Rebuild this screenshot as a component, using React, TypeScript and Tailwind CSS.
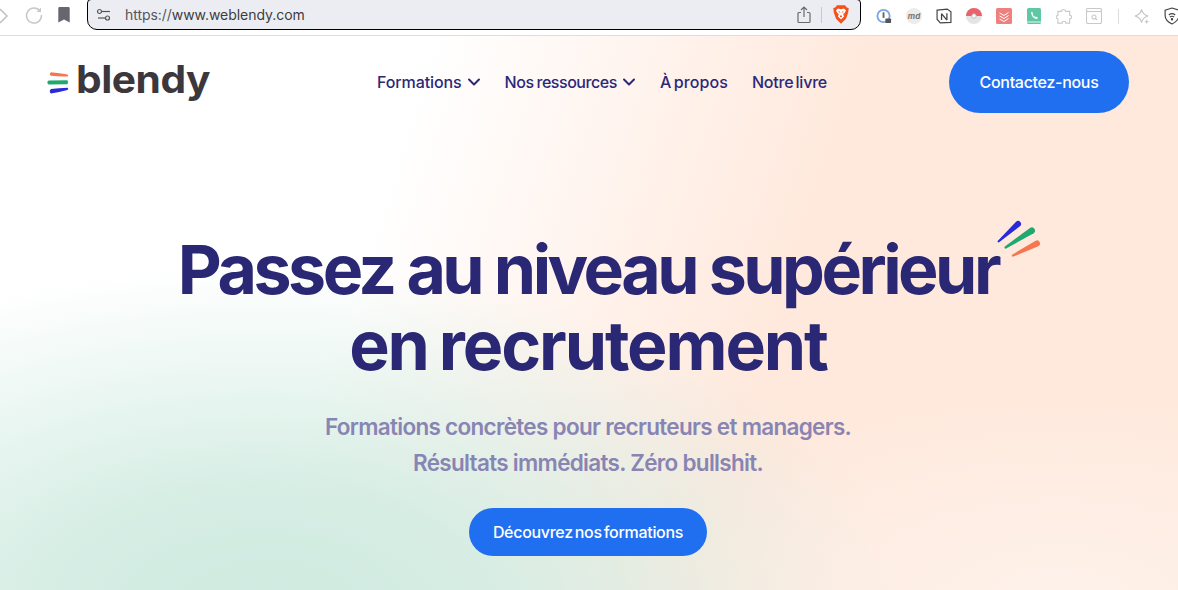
import { ChevronDown } from "lucide-react";

const font = "font-['Inter','Noto_Sans',sans-serif]";

function BrowserBar() {
  return (
    <div className="h-[36px] shrink-0 bg-white border-b border-[#dedede] flex items-center font-['Inter',sans-serif]">
      <div className="w-[87px] shrink-0 h-full flex items-center relative">
        <svg width="10" height="18" viewBox="0 0 10 18" className="absolute left-0 top-[7px]" fill="none" stroke="#c4c4c4" strokeWidth="1.6"><path d="M0 2 L7 9 L0 16" /></svg>
        <svg width="20" height="20" viewBox="0 0 20 20" className="absolute left-[24px] top-[5px]" fill="none" stroke="#c8c8c8" strokeWidth="1.5"><path d="M16 6 A7.5 7.5 0 1 0 17.5 10" /><path d="M12.5 7 L17 7 L17 2.5 Z" fill="#c8c8c8" stroke="none" /></svg>
        <svg width="12" height="16" viewBox="0 0 12 16" className="absolute left-[58px] top-[7px]"><path d="M1.5 0 H10.5 A1.2 1.2 0 0 1 11.7 1.2 V15.6 L6 12.6 L0.3 15.6 V1.2 A1.2 1.2 0 0 1 1.5 0 Z" fill="#666670" /></svg>
      </div>
      <div className="w-[774px] shrink-0 h-[31px] -mt-[6px] bg-[#ecedf3] border border-black rounded-b-[10px] rounded-t-[4px] flex items-center">
        <svg width="16" height="14" viewBox="0 0 16 14" className="ml-[8px]" fill="none" stroke="#555" strokeWidth="1.2"><circle cx="3.5" cy="3.5" r="2" /><path d="M6 3.5 H14" /><circle cx="11.5" cy="10" r="2" /><path d="M2 10 H9" /></svg>
        <span className="ml-[13px] text-[14px] text-[#55555c] tracking-[-0.05px]">https://<span className="text-[#3c3c40]">www.weblendy.com</span></span>
        <div className="ml-auto flex items-center">
          <svg width="14" height="18" viewBox="0 0 14 18" fill="none" stroke="#6a6a6a" strokeWidth="1.2"><path d="M4 6.5 H2 A1 1 0 0 0 1 7.5 V15.5 A1 1 0 0 0 2 16.5 H12 A1 1 0 0 0 13 15.5 V7.5 A1 1 0 0 0 12 6.5 H10" /><path d="M7 11 V1.5 M4 4 L7 1 L10 4" /></svg>
          <div className="w-px h-[16px] bg-[#c8c8cc] ml-[10px] mr-[11px]" />
          <svg width="16" height="19" viewBox="0 0 16 19" className="mr-[11px]">
            <path d="M4 0.3 H12 L13.8 2.4 L15.7 3 L15.2 7.5 L13 13.8 L8 18.7 L3 13.8 L0.8 7.5 L0.3 3 L2.2 2.4 Z" fill="#f4511e" />
            <path d="M5 3.4 L8 4.3 L11 3.4 L13 5.6 L11.5 8.2 L10.2 8.8 L11 11.5 L8 14.5 L5 11.5 L5.8 8.8 L4.5 8.2 L3 5.6 Z" fill="#fff" />
            <path d="M5.6 6.6 L7.2 7.4 M10.4 6.6 L8.8 7.4 M7 11 L8 12 L9 11 Z" stroke="#f4511e" strokeWidth="0.9" fill="#f4511e" />
          </svg>
        </div>
      </div>
      <div className="flex-1 min-w-0 flex items-center pl-[15px] gap-[14px] overflow-hidden h-full -mt-[3px]">
        <svg className="shrink-0" width="16" height="17" viewBox="0 0 17 17" fill="none"><circle cx="8" cy="8" r="6.5" stroke="#7ba6e4" strokeWidth="2" /><rect x="7" y="4" width="2" height="6" fill="#666" /><rect x="10" y="10.5" width="6" height="5" rx="1" fill="#555" /></svg>
        <div className="shrink-0 w-[16px] h-[16px] rounded-full bg-[#ececec] text-[8px] italic font-bold text-[#777] flex items-center justify-center">md</div>
        <svg className="shrink-0" width="16" height="16" viewBox="0 0 15 15" fill="none"><path d="M1 2 L10.5 1 L14 3.5 V13.5 L4 14 L1 10.5 Z" fill="#fff" stroke="#444" strokeWidth="1.1" /><path d="M5.2 5.2 V11.3 M5.2 5.2 L10.2 11.3 M10.2 5 V11.3" stroke="#444" strokeWidth="1.2" /></svg>
        <svg className="shrink-0" width="16" height="16" viewBox="0 0 16 16"><circle cx="8" cy="8" r="8" fill="#e4e4e4" /><path d="M0 8 A8 8 0 0 1 16 8 Z" fill="#e8636b" /><circle cx="8" cy="8" r="2.2" fill="#fff" stroke="#bbb" /></svg>
        <svg className="shrink-0" width="16" height="16" viewBox="0 0 16 16"><rect width="16" height="16" rx="1.5" fill="#ee8080" /><path d="M3.5 5 L8 7.5 L12.5 4.5 M3.5 8 L8 10.5 L12.5 7.5 M3.5 11 L8 13.5 L12.5 10.5" fill="none" stroke="#fff" strokeWidth="1" /></svg>
        <svg className="shrink-0" width="16" height="16" viewBox="-1 0 16 16"><rect width="14" height="16" rx="1.5" fill="#5fc7a6" /><rect x="0" y="13.5" width="14" height="1" fill="#e6f6f0" /><path d="M5 3.5 L6.2 5.8 L5.6 6.6 Q6.5 8.3 8.2 9 L9 8.4 L11 9.7 L10 11 Q5 11 4 4.5 Z" fill="#fff" /></svg>
        <svg className="shrink-0" width="16" height="17" viewBox="0 0 17 17" fill="none" stroke="#c9c9c9" strokeWidth="1.2"><path d="M6 3 Q6 1 8 1 Q10 1 10 3 H14.5 V7 Q16.5 7 16.5 9 Q16.5 11 14.5 11 V15.5 H10.5 Q10.5 13.5 8.5 13.5 Q6.5 13.5 6.5 15.5 H2 V11 Q0.5 11 0.5 9 Q0.5 7 2 7 V3 Z" /></svg>
        <svg className="shrink-0" width="16" height="16" viewBox="0 0 16 16" fill="none" stroke="#c9c9c9" strokeWidth="1.1"><rect x="0.5" y="0.5" width="15" height="15" rx="1.5" /><path d="M0.5 3.5 H15.5" /><circle cx="8" cy="9" r="2" /><path d="M9.5 10.5 L11 12" /></svg>
        <div className="shrink-0 w-px h-[15px] bg-[#dddddd] ml-[2px] mr-[1px]" />
        <svg className="shrink-0" width="16" height="17" viewBox="0 0 17 17" fill="none" stroke="#c4c4c4" strokeWidth="1.1"><path d="M8 1 Q9 6.5 15 8 Q9 9.5 8 15 Q7 9.5 1 8 Q7 6.5 8 1 Z" /><path d="M13.5 12 V16 M11.5 14 H15.5" /></svg>
        <svg className="shrink-0" width="16" height="18" viewBox="0 0 15 17" fill="none" stroke="#444" strokeWidth="1.1"><path d="M7.5 1 L14 3 V8 Q14 13 7.5 16 Q1 13 1 8 V3 Z" /><path d="M4.5 7.5 Q7.5 5 10.5 7.5 M5.5 9.5 Q7.5 8 9.5 9.5" /><circle cx="7.5" cy="11.5" r="0.6" fill="#444" /></svg>
      </div>
    </div>
  );
}

function Logo() {
  return (
    <div className="flex items-center w-[164px] shrink-0">
      <svg width="24" height="24" viewBox="0 0 24 24" className="mr-[6px] mt-[1px] shrink-0" fill="none">
        <path d="M5 1.2 Q14 2 21.5 3.4 Q23 4.6 21.5 5.4 Q13 5.6 5 4.8 Q2.5 3 5 1.2 Z" fill="#f6764f" />
        <path d="M2.6 9.4 L21.4 9.2 Q23 11.2 21.4 13.2 L2.6 13.4 Q0 11.4 2.6 9.4 Z" fill="#1fa870" />
        <path d="M5 18 Q13 17.2 21.5 16.8 Q23 17.6 21.5 19 Q13 21.2 5 22.6 Q2.5 20.4 5 18 Z" fill="#2a2ad8" />
      </svg>
      <span className="text-[38px] leading-none font-bold text-[#3b373d] tracking-[-0.4px] -mt-[6px] origin-left scale-x-[1.07]">blendy</span>
    </div>
  );
}

function NavItem({ label, chevron, cls }: { label: string; chevron?: boolean; cls: string }) {
  return (
    <a className={`flex items-center text-[16px] font-medium text-[#2b2878] ${cls}`}>
      <span>{label}</span>
      {chevron && <ChevronDown size={20} strokeWidth={2.4} className="ml-[2px] -mr-[3px]" />}
    </a>
  );
}

export default function App() {
  return (
    <div className={`${font} w-[1178px] h-[590px] overflow-hidden flex flex-col bg-white`}>
      <BrowserBar />
      <main className="flex-1 flex flex-col bg-[radial-gradient(ellipse_440px_210px_at_1060px_570px,rgba(253,245,239,0.75)_0%,rgba(253,245,239,0)_100%),radial-gradient(ellipse_640px_340px_at_260px_570px,#cfeae0_0%,rgba(210,236,226,0.9)_35%,rgba(214,238,229,0)_100%),linear-gradient(108deg,#ffffff_32%,#ffe9dd_64%,#ffe9dd_100%)]">
        <header className="h-[92px] shrink-0 flex items-center pl-[46px] pr-[49px]">
          <Logo />
          <nav className="flex items-center gap-[24px] ml-[167px]">
            <NavItem label="Formations" chevron cls="tracking-[-0.1px]" />
            <NavItem label="Nos ressources" chevron cls="tracking-[-0.45px] [word-spacing:-1px]" />
            <NavItem label="À propos" cls="tracking-[0.1px] [word-spacing:-2px]" />
            <NavItem label="Notre livre" cls="tracking-[-0.2px] [word-spacing:-2px]" />
          </nav>
          <a className="ml-auto w-[180px] h-[62px] rounded-full bg-[#1f6ff0] text-white text-[16px] font-medium flex items-center justify-center tracking-[-0.3px]">Contactez-nous</a>
        </header>
        <section className="flex flex-col items-center pr-[2px]">
          <div className="relative mt-[103px]">
            <h1 className="text-[68px] leading-[76px] font-bold text-[#2a2774] text-center whitespace-nowrap">
              <span className="tracking-[-3.5px]">Passez au niveau supérieur</span><br />
              <span className="tracking-[-2.1px] [word-spacing:-3px]">en recrutement</span>
            </h1>
            <svg width="44" height="38" viewBox="0 0 44 38" fill="none" className="absolute right-[-43px] top-[-11px]">
              <path d="M0.9 20.8 L19.05 1.7 A3 3 0 0 1 22.95 6.3 L2.1 22.2 A0.9 0.9 0 0 1 0.9 20.8 Z" fill="#2a2ad8" />
              <path d="M7.85 26.5 L33.3 7.8 A3.2 3.2 0 0 1 36.7 13.2 L9.15 28.5 A1.2 1.2 0 0 1 7.85 26.5 Z" fill="#1fa870" />
              <path d="M15.5 34.4 L38.65 20.8 A3 3 0 0 1 41.35 26.2 L16.5 36.6 A1.2 1.2 0 0 1 15.5 34.4 Z" fill="#f6764f" />
            </svg>
          </div>
          <p className="mt-[26px] text-[22.5px] leading-[36px] font-semibold text-[#8885b3] text-center tracking-[-0.7px]">
            Formations concrètes pour recruteurs et managers.<br />Résultats immédiats. Zéro bullshit.
          </p>
          <a className="mt-[27px] w-[238px] h-[48px] rounded-full bg-[#1f6ff0] text-white text-[16px] font-medium flex items-center justify-center tracking-[-0.3px] [word-spacing:-2px]">Découvrez nos formations</a>
        </section>
      </main>
    </div>
  );
}
